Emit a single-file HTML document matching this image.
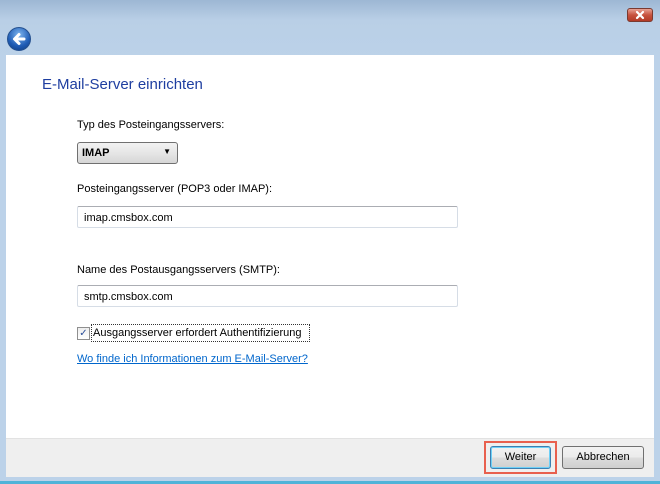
<!DOCTYPE html>
<html><head><style>
*{margin:0;padding:0;box-sizing:border-box}
body{width:660px;height:484px;overflow:hidden;background:linear-gradient(#9db7d4 0,#b9cfe6 20px,#bcd2e9 60px,#bcd2e9 100%);font-family:"Liberation Sans",sans-serif;font-size:11px;color:#000;position:relative}
.abs{position:absolute}
.panel{left:6px;top:55px;width:648px;height:383px;background:#fff}
.foot{left:6px;top:438px;width:648px;height:39px;background:#efefef;border-top:1px solid #e2e2e2}
.bot{left:0;top:481px;width:660px;height:3px;background:#4fb3d8}
.close{left:627px;top:8px;width:26px;height:14px;border:1px solid #7a3a30;border-radius:3px;background:linear-gradient(#e8a294,#c7523e 50%,#b23a26)}
.back{left:7px;top:27px;width:24px;height:24px;border-radius:50%;background:radial-gradient(circle at 50% 30%,#7fb6ef,#1f5cb5 60%,#0e3a80);border:1px solid #24508f}
.title{left:42px;top:76px;font-size:15px;color:#1e3ea0}
.lbl{left:77px}
.input{left:77px;width:381px;height:22px;border:1px solid #d6dde6;border-top-color:#abadb3;border-radius:2px;padding:5px 6px;background:#fff}
.sel{left:77px;top:142px;width:101px;height:22px;border:1px solid #707070;border-radius:3px;background:linear-gradient(#f2f2f2,#e6e6e6 50%,#d6d6d6);padding:4px 4px;font-weight:bold}
.btn{top:446px;height:23px;border:1px solid #707070;border-radius:3px;background:linear-gradient(#f2f2f2,#ebebeb 50%,#dddddd 51%,#cfcfcf);text-align:center;line-height:21px}
</style></head><body>
<div class="abs close"><svg width="24" height="12" viewBox="0 0 24 12"><path d="M9 3L15 9M15 3L9 9" stroke="#fff" stroke-width="2.2" stroke-linecap="round"/></svg></div>
<div class="abs back"><svg width="22" height="22" viewBox="0 0 22 22"><path d="M16 11H7M11 6.5L6.5 11L11 15.5" stroke="#fff" stroke-width="3" fill="none" stroke-linecap="round" stroke-linejoin="round"/></svg></div>
<div class="abs panel"></div>
<div class="abs foot"></div>
<div class="abs bot"></div>
<div class="abs title">E-Mail-Server einrichten</div>
<div class="abs lbl" style="top:119px">Typ des Posteingangsservers:</div>
<div class="abs sel">IMAP<span style="position:absolute;right:6px;top:4px;font-size:8px">▼</span></div>
<div class="abs lbl" style="top:183px">Posteingangsserver (POP3 oder IMAP):</div>
<div class="abs input" style="top:206px">imap.cmsbox.com</div>
<div class="abs lbl" style="top:264px">Name des Postausgangsservers (SMTP):</div>
<div class="abs input" style="top:285px">smtp.cmsbox.com</div>
<div class="abs" style="left:77px;top:327px;width:13px;height:13px;border:1px solid #8f8f8f;background:linear-gradient(#eee,#fff);font-size:10px;line-height:11px;text-align:center;color:#2a4f9a">✓</div>
<div class="abs" style="left:91px;top:324px;border:1px dotted #333;padding:2px 3px 2px 1px;width:219px">Ausgangsserver erfordert Authentifizierung</div>
<div class="abs lbl" style="top:353px;color:#0066cc;text-decoration:underline">Wo finde ich Informationen zum E-Mail-Server?</div>
<div class="abs" style="left:484px;top:441px;width:73px;height:33px;border:2px solid #e8604e"></div>
<div class="abs btn" style="left:490px;width:61px;border-color:#3c7fb1;box-shadow:inset 0 0 0 1px #6ed0f7">Weiter</div>
<div class="abs btn" style="left:562px;width:82px">Abbrechen</div>
</body></html>
